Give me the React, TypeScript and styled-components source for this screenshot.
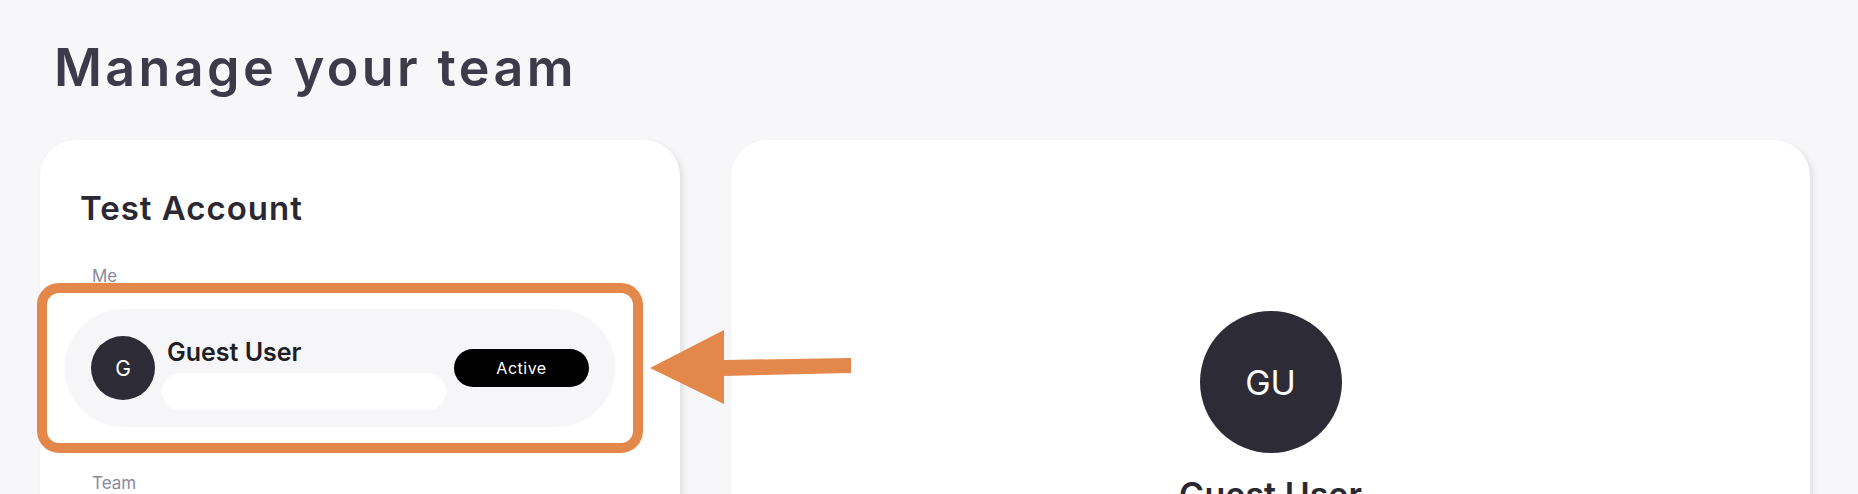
import { createGlobalStyle, styled } from "styled-components";

const GlobalStyle = createGlobalStyle`
    html, body {
        margin: 0;
        padding: 0;
        overflow: hidden;
        background: #f7f7f9;
        font-family: Inter, "Noto Sans", sans-serif;
    }
`;

//Página inteira
const Page = styled.div`
    padding: 37px 48px 0 40px;
    min-height: 494px;
    box-sizing: border-box;
`;

const Title = styled.h1`
    margin: 0 0 41px 14px;
    font-size: 52px;
    line-height: 62px;
    font-weight: 600;
    letter-spacing: 3.4px;
    color: #3d3b4a;
`;

const Columns = styled.div`
    display: grid;
    grid-template-columns: 640px 1fr;
    gap: 51px;
    align-items: start;
`;

const Card = styled.section`
    position: relative;
    background: #ffffff;
    border-radius: 36px;
    box-shadow: 3px 3px 6px rgba(0, 0, 0, 0.1);
    min-height: 420px;
    box-sizing: border-box;
`;

const AccountCard = styled(Card)`
    padding: 48px 26px 0;
`;

const AccountName = styled.h2`
    margin: 0 0 38px 14px;
    font-size: 33px;
    line-height: 40px;
    font-weight: 600;
    letter-spacing: 1px;
    color: #2a2833;
`;

const Label = styled.div<{ $gap?: number }>`
    margin: 0 0 ${(p) => p.$gap ?? 0}px 26px;
    font-size: 17px;
    line-height: 20px;
    color: #8b8a9b;
`;

const RowWrap = styled.div`
    position: relative;
    width: 548px;
    margin-bottom: 47px;
`;

const Row = styled.div`
    display: flex;
    align-items: center;
    gap: 7px;
    height: 116px;
    padding: 0 25px;
    box-sizing: border-box;
    background: #f6f6f8;
    border-radius: 58px;
    box-shadow: 0 0 3px rgba(0, 0, 0, 0.09);
`;

const Avatar = styled.div<{ $size: number; $font: number }>`
    flex: none;
    width: ${(p) => p.$size}px;
    height: ${(p) => p.$size}px;
    border-radius: 50%;
    background: #2d2b36;
    color: #ffffff;
    display: flex;
    align-items: center;
    justify-content: center;
    font-size: ${(p) => p.$font}px;
    font-weight: 400;
`;

const NameBlock = styled.div`
    display: flex;
    flex-direction: column;
    gap: 6px;
    width: 284px;
    margin-top: 11px;
`;

const UserName = styled.div`
    padding-left: 5px;
    font-size: 25px;
    line-height: 30px;
    font-weight: 600;
    color: #1f1d26;
`;

const EmailField = styled.div`
    height: 37px;
    border-radius: 19px;
    background: #ffffff;
`;

const Badge = styled.div`
    flex: none;
    margin-left: 1px;
    width: 135px;
    height: 38px;
    border-radius: 19px;
    background: #000000;
    color: #ffffff;
    display: flex;
    align-items: center;
    justify-content: center;
    font-size: 16px;
    letter-spacing: 0.5px;
`;

//Destaque laranja por cima da linha
const Highlight = styled.div`
    position: absolute;
    top: -27px;
    left: -29px;
    right: -29px;
    bottom: -27px;
    border: 10px solid #e3884a;
    border-radius: 22px;
    pointer-events: none;
`;

const Arrow = styled.svg`
    position: absolute;
    left: 584px;
    top: 19px;
    z-index: 2;
`;

const ProfileCard = styled(Card)`
    display: flex;
    flex-direction: column;
    align-items: center;
    padding-top: 171px;
`;

const ProfileName = styled.div`
    margin-top: 22px;
    font-size: 34px;
    line-height: 40px;
    font-weight: 600;
    color: #2a2833;
`;

const App = () => {
    return (
        <>
            <GlobalStyle />
            <Page>
                <Title>Manage your team</Title>
                <Columns>
                    <AccountCard>
                        <AccountName>Test Account</AccountName>
                        <Label $gap={24}>Me</Label>
                        <RowWrap>
                            <Row>
                                <Avatar $size={64} $font={21}>G</Avatar>
                                <NameBlock>
                                    <UserName>Guest User</UserName>
                                    <EmailField />
                                </NameBlock>
                                <Badge>Active</Badge>
                            </Row>
                            <Highlight />
                            <Arrow width="201" height="76" viewBox="0 0 201 76">
                                <path d="M0 39 L74 1 L74 31 L201 29 L201 44 L74 47 L74 75 Z" fill="#e3884a" />
                            </Arrow>
                        </RowWrap>
                        <Label>Team</Label>
                    </AccountCard>
                    <ProfileCard>
                        <Avatar $size={142} $font={34}>GU</Avatar>
                        <ProfileName>Guest User</ProfileName>
                    </ProfileCard>
                </Columns>
            </Page>
        </>
    );
};

export default App;
